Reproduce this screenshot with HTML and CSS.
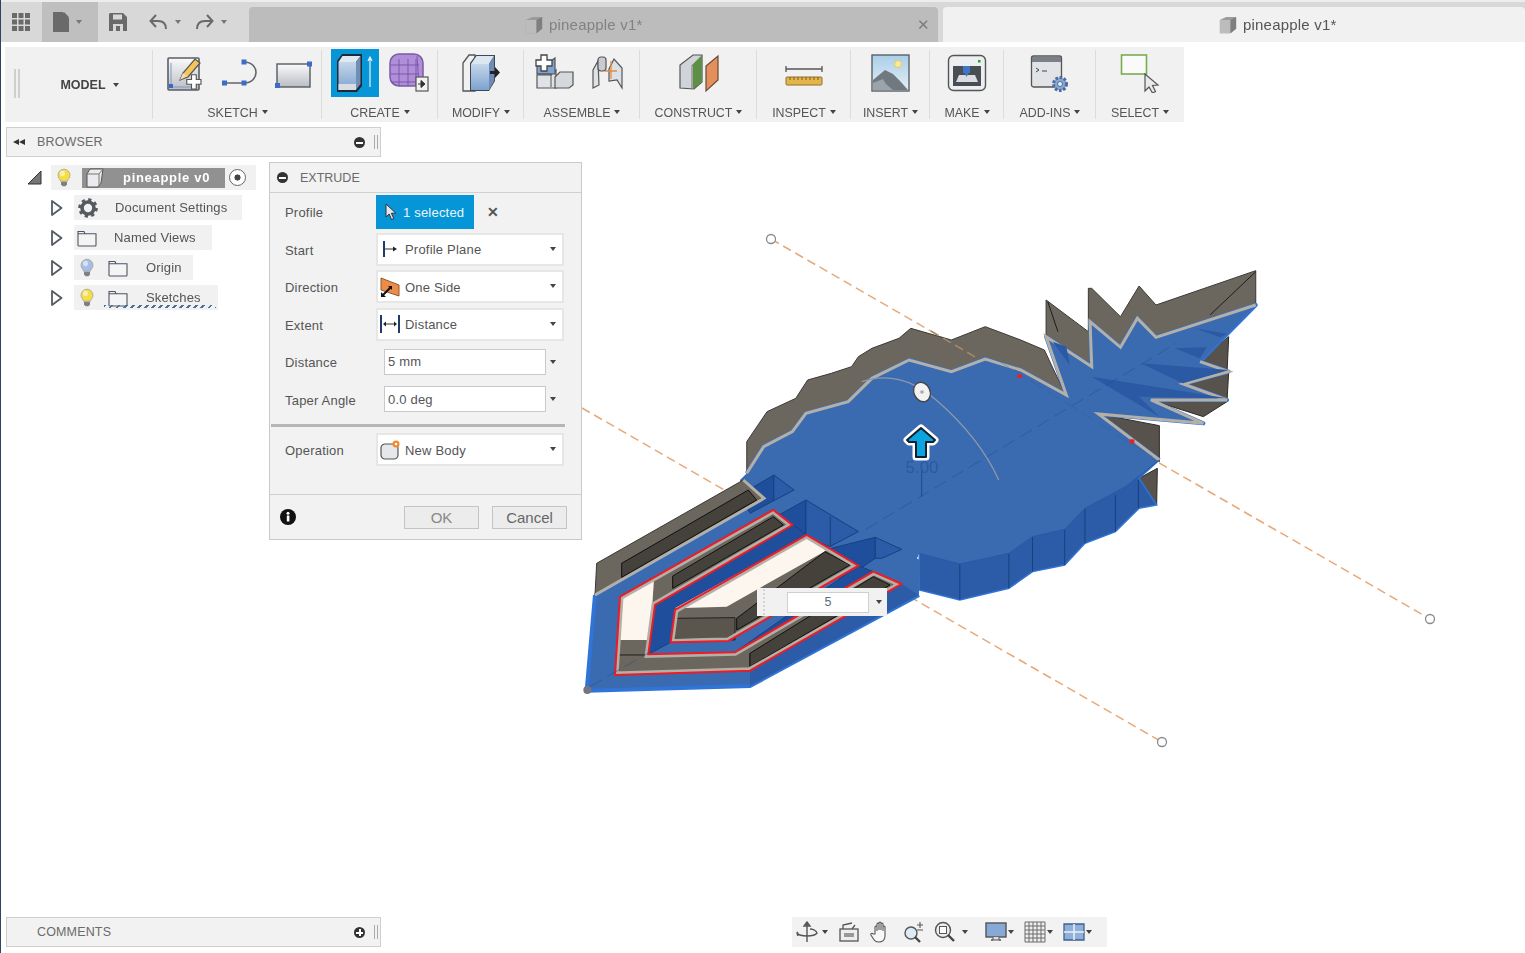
FILE: index.html
```html
<!DOCTYPE html>
<html lang="en">
<head>
<meta charset="utf-8">
<title>pineapple v1*</title>
<link rel="stylesheet" href="styles.css">
</head>
<body>
<svg class="defs" width="0" height="0">
  <defs>
    <linearGradient id="gBox" x1="0" y1="0" x2="0" y2="1"><stop offset="0" stop-color="#fafafa"/><stop offset="1" stop-color="#b9bec4"/></linearGradient>
    <linearGradient id="gBlue" x1="0" y1="0" x2="0" y2="1"><stop offset="0" stop-color="#c5d6ea"/><stop offset="1" stop-color="#7ea3cf"/></linearGradient>
    <linearGradient id="gSky" x1="0" y1="0" x2="0" y2="1"><stop offset="0" stop-color="#a9cfe9"/><stop offset="1" stop-color="#e6eef2"/></linearGradient>
    <symbol id="bulb" viewBox="0 0 16 20">
      <path d="M8 1.200a6 6 0 0 1 6 6c0 2.600-2 3.800-2.600 6H4.600C4 11 2 9.800 2 7.200a6 6 0 0 1 6-6z" fill="currentColor" stroke="#a5a594" stroke-width=".8"/>
      <ellipse cx="6.500" cy="5.500" rx="2.500" ry="2.800" fill="#fff" opacity=".55"/>
      <path d="M5 13.800h6v2.500l-1.500 2h-3L5 16.300z" fill="#7d8088"/>
    </symbol>
    <symbol id="folder" viewBox="0 0 20 18">
      <path d="M1 15.500V2.500h6l1 2.300h11v11.200a1 1 0 0 1-1 1H2a1 1 0 0 1-1-1.500zM1 4.800h7" fill="#f4f4f4" stroke="#4e5560" stroke-width="1.100"/>
    </symbol>
    <symbol id="tri" viewBox="0 0 14 18">
      <path d="M2 2l9.500 7L2 16z" fill="#fff" stroke="#555b63" stroke-width="1.800" stroke-linejoin="round"/>
    </symbol>
    <symbol id="cube" viewBox="0 0 16 16">
      <path d="M1.500 4L6.500 1.500H14.500V11L10 14.500H1.500z" fill="#9b9b9b"/><path d="M1.500 4H10V14.500H1.500z" fill="#bcbcbc"/><path d="M10 4l4.500-2.500V11L10 14.500z" fill="#7f7f7f"/>
    </symbol>
    <clipPath id="cA"><polygon points="120,350 105,585 510,572 965,312 880,275 465,517 205,523 225,375 637,135 580,90"/></clipPath>
    <clipPath id="cB"><polygon points="285,390 680,165 835,257 445,483 272,487"/></clipPath>
  </defs>
</svg>

<svg class="canvas" viewBox="0 0 1525 953" width="1525" height="953">
  <line class="dash" x1="771" y1="239" x2="1430" y2="619"/>
  <line class="dash" x1="582" y1="408" x2="1162" y2="742"/>
  <circle class="end" cx="771" cy="239" r="4.500"/>
  <circle class="end" cx="1430" cy="619" r="4.500"/>
  <circle class="end" cx="1162" cy="742" r="4.500"/>

  <g transform="translate(740 260) scale(.3382 .3333)">
    <polygon class="wall" points="20,545 80,455 165,415 200,360 270,340 330,320 350,290 390,265 470,235 505,205 625,240 725,200 830,240 900,270 965,410 850,450 500,420 60,640 20,640"/>
    <polygon class="wall" points="905,120 1030,215 1030,85 1040,85 1125,170 1180,78 1230,135 1525,32 1525,135 1230,232 1175,175 1125,262 1035,185 1040,320 905,230"/>
    <line class="ink" x1="1390" y1="165" x2="1525" y2="35"/>
    <line class="ink" x1="910" y1="125" x2="940" y2="215"/>
    <polygon class="walld" points="1445,230 1440,340 1360,300"/>
    <polygon class="walld" points="1310,372 1445,335 1440,425"/>
    <polygon class="walld" points="1215,420 1440,425 1370,470"/>
    <polygon class="walld" points="1060,462 1240,497 1240,605 1150,560"/>
    <polygon class="walld" points="1180,655 1234,625 1232,735"/>
    <polygon class="side" points="530,880 530,990 650,1020 795,985 865,935 960,915 1020,850 1110,815 1180,745 1232,735 1180,655 1240,600 1000,700"/>
    <line class="thin" x1="650" y1="912" x2="650" y2="1020"/>
    <line class="thin" x1="795" y1="880" x2="795" y2="985"/>
    <line class="thin" x1="865" y1="830" x2="865" y2="935"/>
    <line class="thin" x1="960" y1="808" x2="960" y2="915"/>
    <line class="thin" x1="1020" y1="745" x2="1020" y2="850"/>
    <line class="thin" x1="1110" y1="705" x2="1110" y2="815"/>
    <line class="thin" x1="1178" y1="660" x2="1178" y2="745"/>
    <polyline class="glow" points="20,640 70,560 155,515 195,460 320,425 390,355 500,300 625,335 725,297 830,330 965,405 905,230 1040,320 1035,185 1125,262 1175,175 1230,232 1525,135 1360,305 1445,335 1310,372 1440,420 1215,420 1370,490 1060,462 1240,600"/>
    <polygon class="faceflat" points="20,640 70,560 155,515 195,460 320,425 390,355 500,300 625,335 725,297 830,330 965,405 905,230 1040,320 1035,185 1125,262 1175,175 1230,232 1525,135 1360,305 1445,335 1310,372 1440,420 1215,420 1370,490 1060,462 1240,600 1140,680 1020,745 960,808 865,830 795,880 650,912 530,880 480,1000 0,1000 0,660"/>
    <polyline class="rim" points="20,640 70,560 155,515 195,460 320,425 390,355 500,300 625,335 725,297 830,330 965,405 905,230 1040,320 1035,185 1125,262 1175,175 1230,232 1525,135"/>
    <polyline class="rim" points="1360,305 1445,335 1310,372 1440,420 1215,420 1370,490 1060,462 1240,600"/>
    <polyline class="seam" points="1240,600 1140,680 1020,745 960,808 865,830 795,880 650,912 530,880"/>
    <polygon class="shade" points="1185,310 1445,330 1310,370"/>
    <polygon class="shade" points="1040,350 1440,415 1180,410 1240,470"/>
    <polygon class="shade" points="1285,265 1380,262 1360,295"/>
    <polygon class="shade" points="1345,205 1440,222 1420,232"/>
    <polygon class="shade" points="925,245 975,315 965,260"/>
    <line class="axis" x1="270" y1="870" x2="1290" y2="250"/>
    <line class="axis faint" x1="760" y1="300" x2="1220" y2="590"/>
    <path class="arc" d="M360 365 C430 340 510 355 580 420 C660 490 725 570 765 660"/>
    <line class="stem" x1="537" y1="625" x2="537" y2="710"/>
    <rect class="mark" x="820" y="344" width="14" height="10"/>
    <rect class="mark" x="1152" y="538" width="14" height="12"/>
  </g>

  <g transform="translate(580 480) scale(.3333)">
    <polygon class="faceflat" points="20,632 510,618 1017,345 1020,240 530,0 495,0 45,345"/>
    <polyline class="glow" points="45,345 20,632 510,618 1017,345"/>
    <polyline class="glow" points="45,345 552,55"/>
  </g>

  <g transform="translate(740 260) scale(.3382 .3333)">
    <polygon class="pocket" points="195,720 195,830 0,930 0,830"/>
    <polygon class="pocketm" points="195,720 350,815 265,860 195,830"/>
    <polygon class="pocket" points="400,832 400,895 300,965 250,870"/>
    <polygon class="pocketm" points="400,832 478,868 420,895 400,895"/>
    <polygon class="pocket" points="100,645 100,722 30,760 0,705"/>
    <polygon class="pocketm" points="100,645 160,690 100,722"/>
    <line class="thin" x1="267" y1="770" x2="267" y2="858"/>
  </g>

  <g transform="translate(580 480) scale(.3333)">
    <polygon class="wall" points="50,250 490,0 552,50 45,345"/>
    <polyline class="rim" points="45,345 552,55 490,0"/>
    <polygon class="pit" points="125,250 505,30 530,60 125,292"/>
    <polygon class="side flatside" points="510,618 1017,345 965,312 510,572"/>
    <polygon class="pocket" points="225,375 640,135 680,165 285,390 272,487 205,523"/>
    <polygon class="pocket" points="465,517 835,257 880,275 510,500"/>
    <polygon class="wall" points="120,350 105,585 510,572 965,312 880,275 465,517 205,523 225,375 637,135 580,90"/>
    <polygon class="cream" points="122,350 222,298 210,480 115,480"/>
    <line class="ink" x1="110" y1="525" x2="205" y2="525"/>
    <line class="ink" x1="510" y1="520" x2="510" y2="572"/>
    <polygon class="pit" points="278,288 580,110 610,135 278,325"/>
    <polygon class="pit" points="510,520 880,290 930,315 510,560"/>
    <polygon class="wall" points="285,390 680,165 835,257 445,483 272,487"/>
    <polygon class="cream" points="285,385 680,165 738,212 440,380"/>
    <polygon class="pit" points="470,415 735,215 810,255 470,450"/>
    <polygon class="pit2" points="290,415 465,413 465,480 280,475"/>
    <polygon class="rimi" clip-path="url(#cA)" points="120,350 105,585 510,572 965,312 880,275 465,517 205,523 225,375 637,135 580,90"/>
    <polygon class="rimi" clip-path="url(#cB)" points="285,390 680,165 835,257 445,483 272,487"/>
    <polygon class="redl" points="120,350 105,585 510,572 965,312 880,275 465,517 205,523 225,375 637,135 580,90"/>
    <polygon class="redl" points="285,390 680,165 835,257 445,483 272,487"/>
    <line class="axis" x1="30" y1="620" x2="210" y2="516"/>
    <circle class="tip" cx="22" cy="630" r="12"/>
  </g>

  <line class="dash over" x1="931" y1="331" x2="977" y2="358"/>
  <ellipse class="handle" cx="922" cy="392" rx="8" ry="10" transform="rotate(-25 922 392)"/>
  <circle class="handle-dot" cx="922" cy="392" r="1.800"/>
  <path class="arrow-halo" d="M921 428l14 12-2 2h-7v15h-10v-15h-7l-2-2z"/>
  <path class="arrow" d="M921 428l14 12-2 2h-7v15h-10v-15h-7l-2-2z"/>
  <text class="dim" x="922" y="473">5.00</text>
</svg>

<div class="app">
  <header class="titlebar">
    <div class="qa">
      <svg class="grid-ic" viewBox="0 0 18 18"><path class="dk" d="M0 0h5v5H0zM6.500 0h5v5h-5zM13 0h5v5h-5zM0 6.500h5v5H0zM6.500 6.500h5v5h-5zM13 6.500h5v5h-5zM0 13h5v5H0zM6.500 13h5v5h-5zM13 13h5v5h-5z"/></svg>
      <div class="file-btn">
        <svg class="file-ic" viewBox="0 0 16 20"><path class="dk" d="M0 0h10l6 6v14H0zM11 0l5 5h-5z"/></svg>
        <i class="caret"></i>
      </div>
      <svg class="save-ic" viewBox="0 0 18 18"><path class="dk" d="M1 0h13l4 4v14H0V1zM4 1.500v5h9v-5zM4 11v7h3v-5h4v5h3v-7z"/></svg>
      <svg class="undo-ic" viewBox="0 0 18 16"><path class="ln" d="M17 15c0-5-3-8-8-8H2M7 1L1.500 7 7 13"/></svg>
      <i class="caret undo-c"></i>
      <svg class="redo-ic" viewBox="0 0 18 16"><path class="ln" d="M1 15c0-5 3-8 8-8h7M11 1l5.500 6L11 13"/></svg>
      <i class="caret redo-c"></i>
    </div>
    <div class="tab tab-off">
      <svg class="tab-ic" viewBox="0 0 16 16"><use href="#cube"/></svg>
      <span>pineapple v1*</span>
      <span class="tab-x">✕</span>
    </div>
    <div class="tab tab-on">
      <svg class="tab-ic" viewBox="0 0 16 16"><use href="#cube"/></svg>
      <span>pineapple v1*</span>
    </div>
  </header>

  <nav class="toolbar">
    <div class="grp g-model">
      <span class="grip"></span>
      <span class="model">MODEL</span><i class="caret"></i>
    </div>
    <div class="grp g-sketch">
      <div class="tools">
        <svg class="ic" viewBox="0 0 40 40"><rect x="3" y="5" width="31" height="32" rx="1" fill="url(#gBox)" stroke="#5a5f66" stroke-width="1.600"/><path d="M6 10v24h24" fill="none" stroke="#7f96c4"/><rect x="4" y="31" width="4" height="4" fill="#3b68c8"/><path d="M15 27l3-7 12-14 5 4-12 14z" fill="#f4c55a" stroke="#555" stroke-width="1.200"/><path d="M15 27l3-7 4 3z" fill="#f0dcb8"/><path d="M30 25h5v5h5v5h-5v5h-5v-5h-5v-5h5z" transform="translate(-2 -2) scale(.95)" fill="#fff" stroke="#555" stroke-width="1.200"/></svg>
        <svg class="ic" viewBox="0 0 40 40"><path d="M5 30h23M25 9c16 0 16 21 0 21" fill="none" stroke="#60656d" stroke-width="1.600"/><path class="vtx" d="M3 27.500h5v5H3zM22.500 27.500h5v5h-5zM22.500 6.500h5v5h-5z"/></svg>
        <svg class="ic" viewBox="0 0 40 40"><rect x="4" y="11" width="33" height="23" fill="url(#gBox)" stroke="#555a62" stroke-width="1.400"/><path class="vtx" d="M34 8.500h5v5h-5zM2 30h5v5H2z"/></svg>
      </div>
      <div class="lbl">SKETCH<i class="caret"></i></div>
    </div>
    <div class="grp g-create">
      <div class="tools tools-tight">
        <div class="tool-on"><svg class="ic" viewBox="0 0 40 40"><path d="M2 8l5-7h20v32l-5 6H2z" fill="#1f2a33"/><path d="M3.500 9h17.500v28H3.500z" fill="url(#gBlue)"/><path d="M3.500 9l4-6h18l-4.500 6z" fill="#dfe9f4"/><path d="M21 9l4.500-6v28L21 37z" fill="#6f8fb6"/><path d="M3.500 31h17.500v6H3.500z" fill="#d9dde3"/><path d="M35 34V5M33 8l2-4 2 4" fill="none" stroke="#e8f3fa" stroke-width="1.200"/></svg></div>
        <svg class="ic" viewBox="0 0 40 40"><rect x="1" y="1" width="33" height="32" rx="9" fill="#b08ed8" stroke="#7a5ba8" stroke-width="1.500"/><path d="M2 12h28M2 21h28M2 29h28M10 6v27M19 6v27M27 6v27M28 3l2 28" fill="none" stroke="#6f4fa3" stroke-width=".8"/><rect x="27" y="24" width="12" height="14" fill="#f2f2f2" stroke="#555" stroke-width="1.200"/><path d="M29 31h4M32 27.500l4 3.500-4 3.500z" fill="#333" stroke="#333"/></svg>
      </div>
      <div class="lbl">CREATE<i class="caret"></i></div>
    </div>
    <div class="grp g-modify">
      <div class="tools">
        <svg class="ic" viewBox="0 0 40 40"><path d="M2 10l6-8h6v36H2z" fill="#f1f1f1" stroke="#555" stroke-width="1.300"/><path d="M9 10l6-8h19v26l-6 10H9z" fill="#3f4955"/><path d="M10 11h18v26H10z" fill="url(#gBlue)"/><path d="M10 11l5.500-8H33l-5 8z" fill="#dde7f2"/><path d="M28 11l5-8v25l-5 9z" fill="#6d8db8"/><path d="M29 18h5v-4l5 5.500-5 5.500v-4h-5z" fill="#222"/></svg>
      </div>
      <div class="lbl">MODIFY<i class="caret"></i></div>
    </div>
    <div class="grp g-assemble">
      <div class="tools">
        <svg class="ic" viewBox="0 0 40 40"><path d="M2 22h14l5-5v18H2z" fill="#dfe3e8" stroke="#555" stroke-width="1.200"/><path d="M2 21V8h14l4-3v16z" fill="#7fa4d3" stroke="#555" stroke-width="1.200"/><path d="M20 24l5-5h13v13l-4 3H20z" fill="#d5d8dc" stroke="#555" stroke-width="1.200"/><path d="M2 21h14v13" fill="none" stroke="#555"/><path d="M6 3h6v5h5v6h-5v5H6v-5H1V8h5z" transform="translate(0 -1)" fill="#fff" stroke="#444" stroke-width="1.300"/></svg>
        <svg class="ic" viewBox="0 0 40 40"><path d="M4 17l5-9 1 24-6 3z" fill="#dfe2e6" stroke="#555" stroke-width="1.200"/><rect x="9" y="4" width="8" height="14" rx="3" fill="#c8ccd2" stroke="#555" stroke-width="1.200"/><path d="M20 16l5-10 8 9v20l-5-8-8 1z" fill="#dce1e7" stroke="#555" stroke-width="1.200"/><path d="M22 8v18M16 18h12" stroke="#e88b3d" stroke-width="1.300"/></svg>
      </div>
      <div class="lbl">ASSEMBLE<i class="caret"></i></div>
    </div>
    <div class="grp g-construct">
      <div class="tools">
        <svg class="ic" viewBox="0 0 40 40"><path d="M1 35V12L14 2h9v27l-8 7z" fill="#d0d3d7" stroke="#555" stroke-width="1.200"/><path d="M14 12h-1v24" fill="none" stroke="#777"/><path d="M14 11l9-9v27l-9 7z" fill="#5d9046"/><path d="M27 38V13l12-10v24z" fill="#e4905c" stroke="#6a4a35" stroke-width="1.200"/></svg>
      </div>
      <div class="lbl">CONSTRUCT<i class="caret"></i></div>
    </div>
    <div class="grp g-inspect">
      <div class="tools">
        <svg class="ic" viewBox="0 0 40 40"><path d="M2 13v6M38 13v6M2 16h36" stroke="#555" stroke-width="1.300"/><rect x="2" y="24" width="36" height="8" rx="1" fill="#e3b54a" stroke="#8e7330"/><path d="M6 24v3M10 24v3M14 24v3M18 24v3M22 24v3M26 24v3M30 24v3M34 24v3" stroke="#7a5f1e"/></svg>
      </div>
      <div class="lbl">INSPECT<i class="caret"></i></div>
    </div>
    <div class="grp g-insert">
      <div class="tools">
        <svg class="ic" viewBox="0 0 40 40"><rect x="1" y="2" width="37" height="36" fill="url(#gSky)" stroke="#5b6066" stroke-width="1.400"/><circle cx="27" cy="11" r="3.500" fill="#f5e8a8" stroke="#edc94e"/><path d="M2 37V27l12-10 8 4 7 7 8 9z" fill="#707880"/><path d="M2 37V30l10-4 3 5 7 6z" fill="#9aa4aa"/></svg>
      </div>
      <div class="lbl">INSERT<i class="caret"></i></div>
    </div>
    <div class="grp g-make">
      <div class="tools">
        <svg class="ic" viewBox="0 0 40 40"><rect x="1.500" y="2.500" width="37" height="35" rx="5" fill="#eceef0" stroke="#555" stroke-width="1.400"/><rect x="6" y="13" width="28" height="20" fill="#4a4d52"/><path d="M9 29h22l-3-7H12z" fill="#d9dde1"/><rect x="16" y="13" width="7" height="7" fill="#3b78c8"/><path d="M17.500 20h4l-2 4z" fill="#3b78c8"/><rect x="31" y="7" width="2.500" height="2.500" fill="#2c9a2c"/></svg>
      </div>
      <div class="lbl">MAKE<i class="caret"></i></div>
    </div>
    <div class="grp g-addins">
      <div class="tools">
        <svg class="ic" viewBox="0 0 40 40"><rect x="1.500" y="3" width="30" height="31" rx="2" fill="#e1e3e6" stroke="#555" stroke-width="1.300"/><rect x="2" y="4" width="29" height="5" fill="#7b8088"/><path d="M6 15l3 2-3 2M12 18h5" fill="none" stroke="#444" stroke-width="1"/><circle cx="30" cy="31" r="6.500" fill="#8aa7d2" stroke="#4d6c9e" stroke-width="3" stroke-dasharray="2.600 1.600"/><circle cx="30" cy="31" r="2.500" fill="#e8eef6" stroke="#4d6c9e"/></svg>
      </div>
      <div class="lbl">ADD-INS<i class="caret"></i></div>
    </div>
    <div class="grp g-select">
      <div class="tools">
        <svg class="ic" viewBox="0 0 40 40"><rect x="1.500" y="2" width="25" height="19" fill="#fafafa" stroke="#77ad4f" stroke-width="1.600"/><path d="M25 21v17l4-4 3.500 6 3-1.500-3-6 5.500-.5z" fill="#e8eaec" stroke="#555" stroke-width="1.200"/></svg>
      </div>
      <div class="lbl">SELECT<i class="caret"></i></div>
    </div>
  </nav>

  <main class="main">
    <section class="panel">
      <span class="rew"><i></i><i></i></span>
      <span class="panel-title">BROWSER</span>
      <i class="dot-btn minus"></i>
      <span class="pgrip"></span>
    </section>
    <ul class="tree">
      <li class="node-root">
        <svg class="corner" viewBox="0 0 15 15"><path d="M1 14L14 1v13z" fill="#777" stroke="#333"/></svg>
        <div class="rowbox rootbox">
          <svg class="bulb yellow"><use href="#bulb"/></svg>
          <div class="rootlabel">
            <svg class="rootcube" viewBox="0 0 20 20"><path d="M2 6l3-5h13l-2 14-3 4H2z" fill="#e9ebee" stroke="#555"/><path d="M2 6h12v13M14 6l4-5" fill="none" stroke="#777"/></svg>
            <span>pineapple v0</span>
          </div>
          <span class="radio"></span>
        </div>
      </li>
      <li class="node">
        <svg class="tri"><use href="#tri"/></svg>
        <div class="rowbox doc">
          <svg class="gear" viewBox="0 0 20 20"><circle cx="10" cy="10" r="6" fill="none" stroke="#555a60" stroke-width="3.600"/><circle cx="10" cy="10" r="8.300" fill="none" stroke="#555a60" stroke-width="3" stroke-dasharray="3.200 3.300"/></svg>
          <span>Document Settings</span>
        </div>
      </li>
      <li class="node">
        <svg class="tri"><use href="#tri"/></svg>
        <div class="rowbox views">
          <svg class="fold"><use href="#folder"/></svg>
          <span>Named Views</span>
        </div>
      </li>
      <li class="node">
        <svg class="tri"><use href="#tri"/></svg>
        <div class="rowbox origin">
          <svg class="bulb blue"><use href="#bulb"/></svg>
          <svg class="fold"><use href="#folder"/></svg>
          <span>Origin</span>
        </div>
      </li>
      <li class="node">
        <svg class="tri"><use href="#tri"/></svg>
        <div class="rowbox sketches">
          <svg class="bulb yellow"><use href="#bulb"/></svg>
          <svg class="fold"><use href="#folder"/></svg>
          <span>Sketches</span>
          <i class="squiggle"></i>
        </div>
      </li>
    </ul>
    <div class="bottom">
      <section class="panel">
        <span class="panel-title comments">COMMENTS</span>
        <i class="dot-btn plus"></i>
        <span class="pgrip"></span>
      </section>
      <div class="nav">
        <svg class="nv orbit" viewBox="0 0 22 22"><path d="M11 1v20M11 1L8 5h6zM1 12c3 4 17 4 20 0-1-3-5-4-7-4M2 11L1 12l1 3" fill="none" stroke="#555" stroke-width="1.400"/></svg><i class="caret c1"></i>
        <svg class="nv" viewBox="0 0 22 22"><rect x="2" y="8" width="18" height="12" fill="#eee" stroke="#555" stroke-width="1.300"/><rect x="6" y="12" width="10" height="4" fill="#999"/><path d="M5 8V4l9-2M14 8l3-4" fill="none" stroke="#555" stroke-width="1.300"/></svg>
        <svg class="nv" viewBox="0 0 22 22"><path d="M5 13V6a1 1 0 0 1 2 0v4-7a1 1 0 0 1 2 0v6-7a1 1 0 0 1 2 0v7-6a1 1 0 0 1 2 0v7-4a1 1 0 0 1 2 0v9c0 4-3 6-6 6-4 0-5-2-8-7-.7-1.500 1-2.500 2-1z" fill="#f8f8f8" stroke="#555" stroke-width="1.100"/></svg>
        <svg class="nv" viewBox="0 0 22 22"><circle cx="9" cy="12" r="6" fill="#dcebf5" stroke="#555" stroke-width="1.400"/><path d="M13 16l5 5" stroke="#444" stroke-width="2.400"/><path d="M15 4h6M18 1v6M15 9h6" stroke="#555" stroke-width="1.100"/></svg>
        <svg class="nv" viewBox="0 0 22 22"><circle cx="9" cy="9" r="7.500" fill="#eee" stroke="#555" stroke-width="1.400"/><rect x="5.500" y="5.500" width="7" height="7" fill="#fff" stroke="#555"/><path d="M14 14l6 6" stroke="#444" stroke-width="2.400"/></svg><i class="caret c2"></i>
        <svg class="nv disp" viewBox="0 0 22 22"><rect x="1" y="2" width="20" height="14" fill="#86a9d6" stroke="#555" stroke-width="1.400"/><path d="M8 16v3H6h10-2v-3" fill="#ddd" stroke="#555"/></svg><i class="caret c3"></i>
        <svg class="nv" viewBox="0 0 22 22"><path d="M1 1h20v20H1zM1 5h20M1 9h20M1 13h20M1 17h20M5 1v20M9 1v20M13 1v20M17 1v20" fill="#eee" stroke="#6a6a6a" stroke-width="1"/></svg><i class="caret c3"></i>
        <svg class="nv" viewBox="0 0 22 22"><path d="M1 3h20v16H1z" fill="#8fb0d9" stroke="#3f5f8f" stroke-width="1.300"/><path d="M11 3v16M1 11h20" stroke="#eaf1f8" stroke-width="1.500"/></svg><i class="caret c3"></i>
      </div>
    </div>
  </main>

  <aside class="dialog">
    <div class="dlg-head"><i class="dot-btn minus dk-dot"></i><span>EXTRUDE</span></div>
    <div class="row">
      <label>Profile</label>
      <div class="picked">
        <svg class="cur" viewBox="0 0 12 18"><path d="M1 1v13l3.200-3 2.300 5.500 2.300-1-2.400-5.200 4.300-.3z" fill="#dfe7ee" stroke="#333" stroke-width="1"/></svg>
        <span>1 selected</span>
      </div>
      <span class="clear">✕</span>
    </div>
    <div class="row">
      <label>Start</label>
      <div class="sel">
        <svg class="opt" viewBox="0 0 20 20"><path d="M4 2v16" stroke="#1f3a6b" stroke-width="2"/><path d="M5 10h9" stroke="#333"/><path d="M13 7.500l4 2.500-4 2.500z" fill="#222"/></svg>
        <span>Profile Plane</span><i class="caret"></i>
      </div>
    </div>
    <div class="row">
      <label>Direction</label>
      <div class="sel">
        <svg class="opt" viewBox="0 0 20 20"><path d="M1 1l18 7v11L1 13z" fill="#ee8c47" stroke="#8c5a34"/><path d="M2 19l9-9" stroke="#111" stroke-width="2"/><path d="M1 20v-5l5 5zM12 9v4l-4-4z" fill="#111"/></svg>
        <span>One Side</span><i class="caret"></i>
      </div>
    </div>
    <div class="row">
      <label>Extent</label>
      <div class="sel">
        <svg class="opt" viewBox="0 0 20 20"><path d="M1 1v18M19 1v18" stroke="#1f3a6b" stroke-width="2"/><path d="M4 10h12" stroke="#333"/><path d="M3 10l3-2.500v5zM17 10l-3-2.500v5z" fill="#222"/></svg>
        <span>Distance</span><i class="caret"></i>
      </div>
    </div>
    <div class="row">
      <label>Distance</label>
      <div class="inp">5 mm</div><i class="caret inp-c"></i>
    </div>
    <div class="row">
      <label>Taper Angle</label>
      <div class="inp">0.0 deg</div><i class="caret inp-c"></i>
    </div>
    <hr class="sep">
    <div class="row">
      <label>Operation</label>
      <div class="sel">
        <svg class="opt" viewBox="0 0 20 20"><rect x="1" y="4" width="17" height="15" rx="4" fill="#e5e7ea" stroke="#555" stroke-width="1.200"/><circle cx="16" cy="4" r="3.500" fill="#f28a2c"/><circle cx="16" cy="4" r="1.300" fill="#fff"/></svg>
        <span>New Body</span><i class="caret"></i>
      </div>
    </div>
    <div class="dlg-foot">
      <svg class="info" viewBox="0 0 16 16"><circle cx="8" cy="8" r="8" fill="#111"/><rect x="6.800" y="6.500" width="2.600" height="6" fill="#fff"/><circle cx="8" cy="4.200" r="1.500" fill="#fff"/></svg>
      <button class="btn ok">OK</button>
      <button class="btn">Cancel</button>
    </div>
  </aside>

  <div class="valuebox">
    <span class="vgrip"></span>
    <div class="vinp">5</div>
    <i class="caret"></i>
  </div>
</div>
</body>
</html>
```

FILE: styles.css
```css
* { box-sizing: border-box; }
html, body { margin: 0; height: 100%; background: #fff; overflow: hidden; }
body { font-family: "Liberation Sans", Arial, sans-serif; color: #555; }
ul { list-style: none; margin: 0; padding: 0; }
i { display: block; font-style: normal; }

.defs { position: absolute; }
.canvas { position: absolute; left: 0; top: 0; z-index: 0; filter: blur(.4px); }

.app {
  position: relative; z-index: 1;
  width: 1525px; height: 953px;
  display: flex; flex-direction: column;
  border-left: 1px solid #2e4560;
  filter: blur(.4px);
}

.caret {
  width: 0; height: 0; flex: none;
  border-left: 3.5px solid transparent;
  border-right: 3.5px solid transparent;
  border-top: 4.5px solid #444;
}

/* title bar */
.titlebar {
  height: 42px; flex: none;
  display: flex; align-items: flex-end;
  background: #d8d8d8;
  border-top: 2px solid #ededed;
}
.qa { width: 248px; height: 40px; flex: none; display: flex; align-items: center; position: relative; }
.grid-ic { width: 18px; height: 18px; margin-left: 11px; }
.file-btn { width: 56px; height: 40px; margin-left: 12px; background: #bfbfbf; display: flex; align-items: center; gap: 7px; padding-left: 11px; }
.file-btn .caret { border-top-color: #777; }
.file-ic { width: 16px; height: 20px; }
.save-ic { width: 18px; height: 18px; margin-left: 11px; }
.undo-ic { width: 18px; height: 16px; margin-left: 22px; }
.undo-c { margin-left: 8px; border-top-color: #777; }
.redo-ic { width: 18px; height: 16px; margin-left: 15px; }
.redo-c { margin-left: 7px; border-top-color: #777; }
.dk { fill: #6a6a6a; }
.ln { fill: none; stroke: #6a6a6a; stroke-width: 2; }

.tab {
  height: 35px;
  display: flex; align-items: center;
  padding-left: 275px;
  font-size: 15px; letter-spacing: .2px;
  border-radius: 4px 4px 0 0;
}
.tab-ic { width: 20px; height: 20px; margin-right: 5px; }
.tab-off { width: 689px; background: #bcbcbc; color: #828282; position: relative; }
.tab-x { position: absolute; right: 8px; font-size: 15px; color: #7c7c7c; }
.tab-on { margin-left: 5px; width: 582px; background: #f1f1f1; color: #555; }

/* toolbar */
.toolbar {
  flex: none; align-self: flex-start;
  margin: 5px 0 0 4px;
  height: 75px;
  display: flex;
  background: #f1f1f1;
}
.grp {
  display: flex; flex-direction: column; align-items: center;
  padding-top: 2px;
  position: relative;
}
.grp::after {
  content: ""; position: absolute; right: 0; top: 3px; bottom: 3px;
  width: 1px; background: #dcdcdc;
}
.g-select::after { display: none; }
.g-model { width: 148px; flex-direction: row; justify-content: center; padding: 0 0 0 21px; gap: 7px; }
.g-sketch { width: 169px; }
.g-sketch .tools { margin-left: 2px; }
.g-create { width: 116px; }
.g-modify { width: 86px; }
.g-assemble { width: 116px; }
.g-construct { width: 117px; }
.g-inspect { width: 94px; }
.g-insert { width: 79px; }
.g-make { width: 74px; }
.g-addins { width: 92px; }
.g-select { width: 88px; }
.grip { position: absolute; left: 9px; top: 22px; width: 6px; height: 29px; border-left: 2px solid #cfcfcf; border-right: 2px solid #cfcfcf; }
.model { font-size: 12.5px; font-weight: bold; color: #444; }
.tools { height: 48px; display: flex; align-items: center; gap: 14px; }
.tools-tight { gap: 10px; }
.ic { width: 40px; height: 40px; flex: none; }
.vtx { fill: #3d6cc8; }
.tool-on { width: 48px; height: 48px; padding: 4px; background: #0696d7; }
.lbl {
  height: 25px; display: flex; align-items: center; gap: 4px;
  font-size: 12.4px; color: #555; white-space: nowrap;
  padding-top: 6px;
}
.lbl .caret { margin-top: -2px; }

/* main */
.main { flex: 1; display: flex; flex-direction: column; padding: 5px 0 6px 5px; min-height: 0; }
.panel {
  width: 375px; height: 30px; flex: none;
  display: flex; align-items: center;
  background: #f2f2f2;
  border: 1px solid #cfcfcf;
  position: relative;
}
.rew { width: 30px; padding-left: 6px; display: flex; flex: none; }
.rew i {
  width: 0; height: 0;
  border-top: 3.5px solid transparent;
  border-bottom: 3.5px solid transparent;
  border-right: 6px solid #333;
}
.panel-title { font-size: 12.5px; letter-spacing: .15px; color: #6a6a6a; }
.comments { margin-left: 30px; }
.dot-btn {
  width: 11px; height: 11px; border-radius: 50%; background: #333;
  position: absolute; right: 15px; top: 9px;
}
.dot-btn::before { content: ""; position: absolute; left: 2px; right: 2px; top: 4.5px; height: 2px; background: #fff; }
.plus::after { content: ""; position: absolute; top: 2px; bottom: 2px; left: 4.5px; width: 2px; background: #fff; }
.pgrip { position: absolute; right: 2px; top: 7px; width: 4px; height: 14px; border-left: 1px solid #aaa; border-right: 1px solid #aaa; }

.tree { display: flex; flex-direction: column; gap: 5px; padding-top: 8px; font-size: 13px; letter-spacing: .15px; color: #555; }
.node-root, .node { display: flex; align-items: center; height: 25px; }
.corner { width: 15px; height: 15px; margin-left: 21px; margin-right: 9px; flex: none; }
.rowbox { height: 25px; background: #f1f1f1; display: flex; align-items: center; position: relative; }
.rootbox { width: 205px; padding-left: 5px; }
.bulb { width: 16px; height: 20px; flex: none; }
.yellow { color: #f6dc45; }
.blue { color: #a5bde8; }
.rootlabel {
  width: 143px; height: 20px; margin-left: 10px;
  background: #919191; color: #fff; font-weight: bold; letter-spacing: .7px;
  display: flex; align-items: center;
}
.rootcube { width: 20px; height: 20px; margin-left: 3px; margin-right: 18px; }
.radio {
  width: 17px; height: 17px; border-radius: 50%; margin-left: 4px;
  border: 1.2px solid #666; background: radial-gradient(circle, #444 2.8px, #fff 3.3px);
}
.node { padding-left: 44px; }
.tri { width: 14px; height: 18px; margin-right: 10px; flex: none; }
.doc { width: 168px; padding-left: 4px; }
.gear { width: 20px; height: 20px; margin-right: 17px; }
.views { width: 138px; padding-left: 3px; }
.fold { width: 20px; height: 18px; }
.views .fold { margin-right: 17px; }
.origin { width: 119px; padding-left: 5px; }
.origin .fold { margin-left: 13px; margin-right: 18px; }
.sketches { width: 144px; padding-left: 5px; }
.sketches .fold { margin-left: 13px; margin-right: 18px; }
.squiggle {
  position: absolute; left: 30px; right: 2px; bottom: 2px; height: 3px;
  background: repeating-linear-gradient(135deg, #4d7096 0 2px, transparent 2px 5px);
}

.bottom { margin-top: auto; display: flex; }
.nav {
  margin-left: 411px; width: 315px; height: 30px;
  background: #f2f2f2;
  display: flex; align-items: center; padding-left: 4px;
}
.nv { width: 22px; height: 22px; flex: none; margin-right: 10px; }
.orbit { margin-right: 4px; }
.c1 { margin-right: 10px; }
.c2 { margin-left: -4px; margin-right: 17px; }
.c3 { margin-left: -9px; margin-right: 10px; }

/* dialog */
.dialog {
  position: absolute; left: 268px; top: 162px;
  width: 313px; height: 378px;
  background: #f2f2f2;
  border: 1px solid #c9c9c9;
  display: flex; flex-direction: column;
  font-size: 13px; letter-spacing: .2px; color: #555;
}
.dlg-head {
  height: 30px; flex: none; display: flex; align-items: center;
  border-bottom: 1px solid #d0d0d0; color: #6a6a6a; padding-left: 30px;
  font-size: 12.5px; letter-spacing: 0;
  position: relative;
}
.dk-dot { left: 7px; right: auto; top: 9px; }
.row { height: 37.5px; flex: none; display: flex; align-items: center; padding-left: 15px; }
.row label { width: 91px; flex: none; padding-top: 2px; }
.picked {
  width: 98px; height: 34px;
  background: #0696d7; color: #e9f6fc;
  display: flex; align-items: center; gap: 6px; padding-left: 9px;
}
.picked span, .sel span { padding-top: 1px; }
.cur { width: 12px; height: 18px; }
.clear { margin-left: 13px; font-size: 14px; font-weight: bold; color: #555; }
.sel {
  width: 188px; height: 33px;
  background: #fff; border: 2px solid #e6e6e6;
  display: flex; align-items: center; padding-left: 2px;
  position: relative;
}
.sel .caret { position: absolute; right: 6px; top: 12px; }
.opt { width: 20px; height: 20px; margin-right: 5px; flex: none; }
.inp {
  width: 162px; height: 26px; margin-left: 8px;
  background: #fff; border: 1px solid #c9c9c9;
  display: flex; align-items: center; padding-left: 3px;
}
.inp-c { margin-left: 4px; }
.sep { width: 294px; height: 3px; margin: 6px 0 4px 1px; flex: none; border: 0; background: #b6b6b6; }
.dlg-foot {
  margin-top: auto; height: 45px; flex: none;
  border-top: 1px solid #d0d0d0;
  display: flex; align-items: center; padding-left: 10px;
}
.info { width: 16px; height: 16px; margin-right: 108px; }
.btn {
  width: 75px; height: 23px; margin-right: 13px; padding: 0;
  font: 15px "Liberation Sans", Arial, sans-serif; color: #666;
  background: #ececec; border: 1px solid #c4c4c4; border-radius: 0;
}
.ok { color: #888; }

/* on-canvas value box */
.valuebox {
  position: absolute; left: 756px; top: 588px;
  width: 130px; height: 28px; background: #f1f1f1;
  display: flex; align-items: center;
}
.vgrip { width: 6px; height: 26px; margin-left: 6px; border-left: 2px dotted #d4d4d4; }
.vinp {
  width: 82px; height: 21px; margin-left: 18px;
  background: #fff; border: 1px solid #cfcfcf;
  font-size: 12.500px; color: #5b6a78; text-align: center; line-height: 19px;
}
.valuebox .caret { margin-left: 7px; }

/* model drawing */
.dash { stroke: #e8a878; stroke-width: 1.500; stroke-dasharray: 9 5; }
.over { stroke: #a8876a; }
.end { fill: #fff; stroke: #8a8a8a; stroke-width: 1.300; }
.wall { fill: #6c675e; stroke: #3b3935; stroke-width: 1; vector-effect: non-scaling-stroke; }
.walld { fill: #57534c; stroke: #2d2b28; stroke-width: 1; vector-effect: non-scaling-stroke; }
.ink { stroke: #1e1d1a; stroke-width: 1; vector-effect: non-scaling-stroke; }
.side { fill: #2c5ca8; stroke: #2f74d6; stroke-width: 1.500; vector-effect: non-scaling-stroke; }
.flatside { stroke: none; }
.thin { fill: none; stroke: #17407f; stroke-width: 1; vector-effect: non-scaling-stroke; }
.faceflat { fill: #3a6ab0; }
.glow { fill: none; stroke: #2f74d6; stroke-width: 4; stroke-linejoin: round; vector-effect: non-scaling-stroke; }
.rim { fill: none; stroke: #b4afa7; stroke-width: 3; vector-effect: non-scaling-stroke; }
.rimi { fill: none; stroke: #b4afa7; stroke-width: 7; vector-effect: non-scaling-stroke; }
.seam { fill: none; stroke: #2a5aa6; stroke-width: 1; vector-effect: non-scaling-stroke; }
.shade { fill: #2b59a3; }
.axis { stroke: #234f92; stroke-width: 1; stroke-dasharray: 14 6; opacity: .55; vector-effect: non-scaling-stroke; }
.faint { opacity: .25; }
.arc { fill: none; stroke: #8d98a8; stroke-width: 1.300; vector-effect: non-scaling-stroke; }
.stem { stroke: #24508f; stroke-width: 1.200; vector-effect: non-scaling-stroke; }
.mark { fill: #ee1c25; }
.pocket { fill: #1f4f9c; stroke: #17407f; stroke-width: 1; vector-effect: non-scaling-stroke; }
.pocketm { fill: #2c5ca8; stroke: #17407f; stroke-width: 1; vector-effect: non-scaling-stroke; }
.pit { fill: #45423c; stroke: #111; stroke-width: 1; vector-effect: non-scaling-stroke; }
.pit2 { fill: #5a564e; stroke: #222; stroke-width: 1; vector-effect: non-scaling-stroke; }
.cream { fill: #fdf6ee; }
.redl { fill: none; stroke: #ee1c25; stroke-width: 2; vector-effect: non-scaling-stroke; }
.tip { fill: #77767e; }
.handle { fill: #f2f2f2; stroke: #444; stroke-width: 1.300; }
.handle-dot { fill: #aaa; }
.arrow-halo { fill: none; stroke: #fff; stroke-width: 7; stroke-linejoin: round; }
.arrow { fill: #0aa5e0; stroke: #10202c; stroke-width: 2; stroke-linejoin: round; }
.dim { font: 17px "Liberation Sans", Arial, sans-serif; fill: #2b5a9f; text-anchor: middle; }
```
